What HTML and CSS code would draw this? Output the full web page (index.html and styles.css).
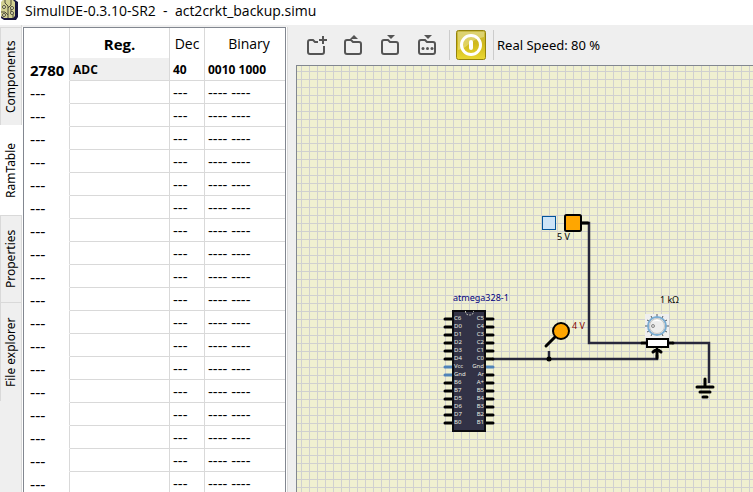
FILE: index.html
```html
<!DOCTYPE html>
<html lang="en">
<head>
<meta charset="utf-8">
<title>SimulIDE</title>
<link rel="stylesheet" href="styles.css">
</head>
<body>
<div class="window">
<header class="titlebar">
  <svg class="logo" width="19" height="20" viewBox="0 0 19 20" aria-hidden="true">
    <path d="M3 0H15L18 2V17L16 20H4L1 18Z" fill="#17153f"/>
    <path d="M3 0H13L15 2V16L13 18H4L1 16V2Z" fill="#d3d192"/>
    <path d="M5 0V3L8 6V18M8 8L11 5V0M1 12H5L8 15M11 9V12L13 13V18" fill="none" stroke="#4d4b3a"/>
    <g fill="#f6f5cf" stroke="#4d4b3a"><circle cx="12" cy="8" r="1.500"/><circle cx="4" cy="7" r="1.500"/><circle cx="4" cy="15" r="1.500"/><circle cx="12" cy="13" r="1.500"/></g>
  </svg>
  <h1 class="title">SimulIDE-0.3.10-SR2  -  act2crkt_backup.simu</h1>
</header>
<div class="workspace">
  <nav class="tabs" role="tablist" aria-label="Side panels">
    <button class="tab tab-components" role="tab">Components</button>
    <button class="tab tab-ram active" role="tab" aria-selected="true">RamTable</button>
    <button class="tab tab-properties" role="tab">Properties</button>
    <button class="tab tab-files" role="tab">File explorer</button>
  </nav>
  <section class="panel" aria-label="RamTable">
    <table class="ram">
      <colgroup><col class="c-addr"><col class="c-reg"><col class="c-dec"><col class="c-bin"></colgroup>
      <thead><tr><th></th><th class="strong">Reg.</th><th>Dec</th><th class="binary">Binary</th></tr></thead>
      <tbody>
        <tr class="filled"><th>2780</th><td class="selected">ADC</td><td>40</td><td>0010 1000</td></tr>
        <tr><th>---</th><td></td><td>---</td><td>---- ----</td></tr>
        <tr><th>---</th><td></td><td>---</td><td>---- ----</td></tr>
        <tr><th>---</th><td></td><td>---</td><td>---- ----</td></tr>
        <tr><th>---</th><td></td><td>---</td><td>---- ----</td></tr>
        <tr><th>---</th><td></td><td>---</td><td>---- ----</td></tr>
        <tr><th>---</th><td></td><td>---</td><td>---- ----</td></tr>
        <tr><th>---</th><td></td><td>---</td><td>---- ----</td></tr>
        <tr><th>---</th><td></td><td>---</td><td>---- ----</td></tr>
        <tr><th>---</th><td></td><td>---</td><td>---- ----</td></tr>
        <tr><th>---</th><td></td><td>---</td><td>---- ----</td></tr>
        <tr><th>---</th><td></td><td>---</td><td>---- ----</td></tr>
        <tr><th>---</th><td></td><td>---</td><td>---- ----</td></tr>
        <tr><th>---</th><td></td><td>---</td><td>---- ----</td></tr>
        <tr><th>---</th><td></td><td>---</td><td>---- ----</td></tr>
        <tr><th>---</th><td></td><td>---</td><td>---- ----</td></tr>
        <tr><th>---</th><td></td><td>---</td><td>---- ----</td></tr>
        <tr><th>---</th><td></td><td>---</td><td>---- ----</td></tr>
        <tr><th>---</th><td></td><td>---</td><td>---- ----</td></tr>
      </tbody>
    </table>
  </section>
  <main class="editor">
    <div class="toolbar">
      <div class="tools">
        <button class="tool" aria-label="New circuit"><svg width="22" height="22" viewBox="0 -2 22 22"><path d="M12 6H9L7 4H4Q2 4 2 6V16Q2 18 4 18H16Q18 18 18 16V10" class="folder"/><path d="M17 0V8M13 4H21" class="folder"/></svg></button>
        <button class="tool" aria-label="Open circuit"><svg width="22" height="22" viewBox="0 -2 22 22"><path d="M4 4H8L10 6H16Q18 6 18 8V16Q18 18 16 18H4Q2 18 2 16V6Q2 4 4 4Z" class="folder"/><path d="M7 3L11 -1L15 3Z" class="arrow"/></svg></button>
        <button class="tool" aria-label="Save circuit"><svg width="22" height="22" viewBox="0 -2 22 22"><path d="M4 4H8L10 6H16Q18 6 18 8V16Q18 18 16 18H4Q2 18 2 16V6Q2 4 4 4Z" class="folder"/><path d="M7 -1H15L11 3Z" class="arrow"/></svg></button>
        <button class="tool" aria-label="Save circuit as"><svg width="22" height="22" viewBox="0 -2 22 22"><path d="M4 4H8L10 6H16Q18 6 18 8V16Q18 18 16 18H4Q2 18 2 16V6Q2 4 4 4Z" class="folder"/><path d="M7 -1H15L11 3Z" class="arrow"/><g class="arrow"><circle cx="6" cy="12.500" r="1.500"/><circle cx="10.500" cy="12.500" r="1.500"/><circle cx="15" cy="12.500" r="1.500"/></g></svg></button>
      </div>
      <span class="divider"></span>
      <button class="power" aria-label="Power circuit"><svg width="30" height="30" viewBox="0 0 30 30">
        <defs><linearGradient id="gold" x1="0" y1="0" x2="0" y2="1"><stop offset="0" stop-color="#c9bb48"/><stop offset=".45" stop-color="#cfb81c"/><stop offset="1" stop-color="#ebd832"/></linearGradient></defs>
        <rect x=".5" y=".5" width="29" height="29" rx="2" fill="url(#gold)" stroke="#94830c"/>
        <path d="M2 2H28V7Q18 9 13 14T2 20Z" fill="#f5efb0" opacity=".45"/>
        <circle cx="15" cy="15" r="9.500" fill="none" stroke="#fff" stroke-width="3"/>
        <path d="M15 12V18" stroke="#fff" stroke-width="4" stroke-linecap="round"/></svg></button>
      <span class="divider"></span>
      <output class="speed">Real Speed: 80 %</output>
    </div>
    <div class="canvas">
      <svg class="scene" role="img" aria-label="Circuit">
        <defs><pattern id="grid" width="8" height="8" patternUnits="userSpaceOnUse" x="4" y="5"><path d="M.5 0V8M0 .5H8" stroke="#d0d0d0"/></pattern></defs>
        <rect width="100%" height="100%" fill="url(#grid)"/>
        <g transform="translate(-297 -66)">
          <g class="wire"><path d="M581 223H589V343H642"/><path d="M492 359H657V355"/><path d="M672 343H709V383"/><path d="M549 359V351"/></g>
          <circle cx="549" cy="359" r="2.500"/>
          <rect x="542.500" y="216.500" width="13" height="13" fill="#cce4f7" stroke="#005499"/>
          <path d="M581 223H588" class="lead"/>
          <rect x="565" y="215" width="16" height="16" rx="1.500" class="source"/>
          <text x="557" y="240" class="label">5 V</text>
          <path d="M546 346L556 336" class="lead"/>
          <circle cx="561" cy="331" r="8" class="source"/>
          <text x="572" y="329" class="label probe">4 V</text>
          <text x="453" y="301" class="label name">atmega328-1</text>
          <path class="pin" d="M445 319H453M445 327H453M445 335H453M445 343H453M445 351H453M445 359H453M445 383H453M445 391H453M445 399H453M445 407H453M445 415H453M445 423H453M485 319H493M485 327H493M485 335H493M485 343H493M485 351H493M485 359H493M485 375H493M485 383H493M485 391H493M485 399H493M485 407H493M485 415H493M485 423H493"/>
          <path class="pin supply" d="M445 367H453M445 375H453M485 367H493"/>
          <rect x="453" y="311" width="32" height="120" fill="#323246" stroke="#0b0b10" stroke-width="2"/>
          <path d="M465.500 311V312Q466 315 469.500 315T473.500 312V311" fill="none" stroke="#c8c8b8" stroke-dasharray="2 1"/>
          <g class="pin-name">
            <text x="454" y="320">C6</text><text x="454" y="328">D0</text><text x="454" y="336">D1</text><text x="454" y="344">D2</text><text x="454" y="352">D3</text><text x="454" y="360">D4</text><text x="454" y="368">Vcc</text><text x="454" y="376">Gnd</text><text x="454" y="384">B6</text><text x="454" y="392">B7</text><text x="454" y="400">D5</text><text x="454" y="408">D6</text><text x="454" y="416">D7</text><text x="454" y="424">B0</text>
          </g>
          <g class="pin-name right">
            <text x="484" y="320">C5</text><text x="484" y="328">C4</text><text x="484" y="336">C3</text><text x="484" y="344">C2</text><text x="484" y="352">C1</text><text x="484" y="360">C0</text><text x="484" y="368">Gnd</text><text x="484" y="376">Ar</text><text x="484" y="384">A+</text><text x="484" y="392">B5</text><text x="484" y="400">B4</text><text x="484" y="408">B3</text><text x="484" y="416">B2</text><text x="484" y="424">B1</text>
          </g>
          <text x="660" y="303" class="label">1 kΩ</text>
          <rect x="645" y="314" width="24" height="24" fill="#efefef"/>
          <g transform="translate(657 326)">
            <path d="M0 -12V-9M6 -10L5 -8M10 -6L8 -5M12 0H9M10 6L8 5M6 10L5 8M-6 -10L-5 -8M-10 -6L-8 -5M-12 0H-9M-10 6L-8 5M-6 10L-5 8" stroke="#555a60"/>
            <circle r="9" fill="#f4f4f4" stroke="#79acd2" stroke-width="2"/><circle r="7.500" fill="#ececec" stroke="#c4c4c4"/>
            <path d="M-5 -4Q0 -9 5 -4Q0 -6 -5 -4Z" fill="#fff"/><circle cx="-4" cy="0" r="1.500" fill="#ddd" stroke="#888"/>
          </g>
          <path d="M642 343H647M668 343H673" class="lead"/>
          <rect x="647" y="339" width="21" height="8" fill="#fff" stroke="#000" stroke-width="2"/>
          <path d="M657 358V349M653 352L657 349L661 352" class="lead"/>
          <path d="M705 379V387M697 387H713M700 392H710M703 397H707" class="lead"/>
        </g>
      </svg>
    </div>
  </main>
</div>
</div>
</body>
</html>
```
FILE: styles.css
```css
* { box-sizing: border-box; }
body { margin: 0; background: #fff; color: #000; font-family: "Open Sans", "Noto Sans", sans-serif; }
button { font: inherit; color: inherit; padding: 0; border: 0; background: none; }
.window { display: flex; flex-direction: column; height: 100vh; overflow: hidden; }
.titlebar { display: flex; align-items: flex-start; flex: none; height: 25px; }
.logo { display: block; flex: none; }
.title { margin: 0 6px; font-size: 14px; line-height: 22px; font-weight: 400; white-space: pre; }
.workspace { display: flex; flex: 1; min-height: 0; background: #efefef; }
.tabs { display: flex; flex-direction: column; flex: none; width: 22px; padding-top: 2px; border-right: 1px solid #d9d9d9; }
.tab { writing-mode: vertical-rl; transform: rotate(180deg); width: 22px; flex: none; border: 1px solid #d9d9d9; border-top: 0; font-family: "Noto Sans", sans-serif; font-size: 12px; line-height: 20px; }
.tab-components { height: 98px; }
.tab-ram { height: 90px; }
.tab-properties { height: 87px; }
.tab-files { height: 99px; }
.tab.active { background: #fff; border-color: #fff; }
.panel { flex: none; width: 266px; margin-top: 2px; padding-left: 1px; background: #fff; border-right: 1px solid #d9d9d9; overflow: hidden; }
.ram { width: 263px; border: 1px solid #828790; border-bottom: 0; border-collapse: separate; border-spacing: 0; table-layout: fixed; background: #fff; }
.c-addr { width: 46px; }
.c-reg { width: 100px; }
.c-dec { width: 35px; }
.ram th, .ram td { height: 23px; padding: 0 0 0 3px; border-right: 1px solid #d9d9d9; border-bottom: 1px solid #d9d9d9; font-size: 15px; line-height: 20px; text-align: left; white-space: nowrap; }
.ram th { font-weight: 400; }
.ram tbody th { padding: 1px 0 0 6px; border-bottom-color: #fff; font-size: 16px; }
.ram thead th { height: 30px; padding: 2px 0 0; font-size: 14px; text-align: center; border-bottom: 0; }
.ram thead .binary { padding-left: 8px; }
.ram thead .strong { font-size: 15px; font-weight: 700; }
.ram th:last-child, .ram td:last-child { border-right: 0; }
.ram .filled td { padding-top: 2px; font-size: 12px; font-weight: 700; }
.ram .filled th { font-family: "Noto Sans", sans-serif; font-size: 15px; font-weight: 700; }
.ram .selected { background: #efefef; }
.editor { display: flex; flex-direction: column; flex: 1; min-width: 0; padding-left: 8px; }
.toolbar { display: flex; align-items: center; flex: none; height: 40px; padding-left: 10px; }
.tools { display: flex; gap: 15px; margin-right: 10px; }
.tool { width: 22px; height: 22px; }
.tool svg, .power svg { display: block; overflow: visible; }
.folder { fill: none; stroke: #555; stroke-width: 2; }
.arrow { fill: #555; }
.divider { width: 1px; height: 30px; background: #ccc; }
.power { width: 30px; height: 30px; margin: 0 7px 0 6px; }
.speed { margin-left: 3px; font-family: "Noto Sans", sans-serif; font-size: 13px; white-space: nowrap; }
.canvas { flex: 1; min-height: 0; border: 1px solid #828790; border-right: 0; border-bottom: 0; background: #f0f0d0; }
.scene { display: block; width: 100%; height: 100%; }
.wire { fill: none; stroke: #28283c; stroke-width: 2.500px; }
.lead { fill: none; stroke: #000; stroke-width: 3px; stroke-linecap: round; }
.pin { stroke: #000; stroke-width: 3px; stroke-linecap: round; }
.supply { stroke: #4f83b8; }
.source { fill: #ffa600; stroke: #000; stroke-width: 2px; }
.label { font-family: "Noto Sans", sans-serif; font-size: 9px; }
.probe { fill: #800000; }
.name { fill: #000080; }
.pin-name { font-family: "Noto Sans", sans-serif; font-size: 6px; fill: #e8ece0; }
.right { text-anchor: end; }
```
